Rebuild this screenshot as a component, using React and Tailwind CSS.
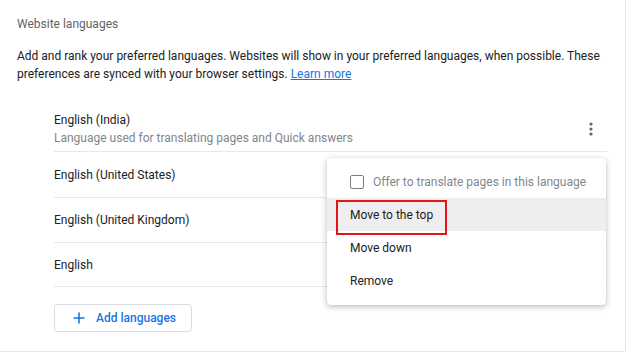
import React from "react";

const languages = [
  { name: "English (India)", note: "Language used for translating pages and Quick answers", h: "h-[46px]" },
  { name: "English (United States)", h: "h-[46px]" },
  { name: "English (United Kingdom)", h: "h-[45px]" },
  { name: "English", h: "h-[44px]" },
];

function MoreIcon() {
  return (
    <svg width="4" height="14" viewBox="0 0 4 14" className="fill-[#5f6368]">
      <circle cx="2" cy="2" r="1.6" />
      <circle cx="2" cy="7" r="1.6" />
      <circle cx="2" cy="12" r="1.6" />
    </svg>
  );
}

function LanguageMenu() {
  return (
    <div className="absolute left-[273px] top-[52px] w-[279px] rounded bg-white py-2 shadow-[0_2px_6px_rgba(0,0,0,0.25),0_0_1px_rgba(0,0,0,0.15)]">
      <div className="flex h-8 items-center gap-[9px] pl-[23px] text-[#80868b]">
        <span className="h-[14px] w-[14px] rounded-[2px] border-[1.5px] border-[#7a7f85]"></span>
        <span>Offer to translate pages in this language</span>
      </div>
      <div className="relative flex h-[33px] items-center bg-[#eeeeee] pl-[23px]">
        <span>Move to the top</span>
        <span className="absolute left-[9px] top-[2px] h-[35px] w-[111px] border-2 border-[#e3151a]"></span>
      </div>
      <div className="flex h-[33px] items-center pl-[23px]">Move down</div>
      <div className="flex h-[33px] items-center pl-[23px]">Remove</div>
    </div>
  );
}

export default function App() {
  return (
    <div className="h-[355px] w-[640px] bg-white font-['Roboto',sans-serif] text-[12px] text-[#202124]">
      <div className="h-[352px] w-[626px] border-r border-b border-[#e8e8e8]">
        <div className="px-[17px] pt-[14px] leading-5 text-[#5f6368]">Website languages</div>
        <p className="mt-[13px] px-[17px] leading-[18px]">
          Add and rank your preferred languages. Websites will show in your preferred languages, when possible. These
          preferences are synced with your browser settings.{" "}
          <a href="#" className="text-[#1a73e8] underline">Learn more</a>
        </p>

        <div className="relative ml-[54px] mr-[18px] mt-[23px]">
          {languages.map((lang, i) => (
            <div
              key={lang.name}
              className={"flex items-center justify-between border-b border-[#e8e8e8] " + lang.h}
            >
              <div className="leading-[18px]">
                <div>{lang.name}</div>
                {lang.note && <div className="text-[#80868b]">{lang.note}</div>}
              </div>
              {i === 0 && (
                <div className="mr-[14px] mt-[1px]">
                  <MoreIcon />
                </div>
              )}
            </div>
          ))}
          <LanguageMenu />
        </div>

        <button className="ml-[54px] mt-[17px] flex h-[28px] items-center gap-[11px] rounded border border-[#dadce0] pl-[18px] pr-[15px] font-medium text-[#1a73e8]">
          <svg width="12" height="12" viewBox="0 0 12 12" className="stroke-[#1a73e8]" strokeWidth="1.6">
            <path d="M6 0.5v11M0.5 6h11" />
          </svg>
          Add languages
        </button>
      </div>
    </div>
  );
}
